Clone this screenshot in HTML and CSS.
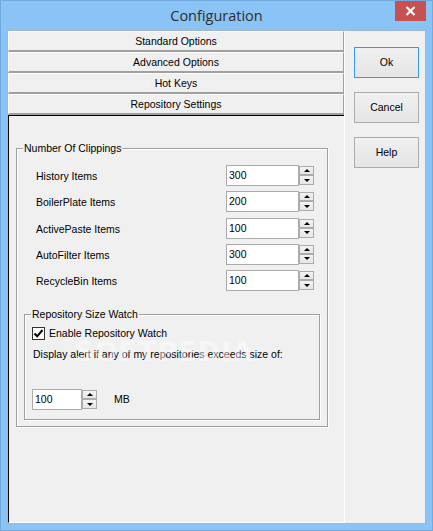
FILE: index.html
```html
<!DOCTYPE html>
<html>
<head>
<meta charset="utf-8">
<link rel="stylesheet" href="styles.css">
</head>
<body>
<div class="window">
  <div class="titlebar">
    <span class="title">Configuration</span>
    <div class="close"><svg width="11" height="10" viewBox="0 0 11 10"><path d="M1.5 1 L9.5 9 M9.5 1 L1.5 9" stroke="#fff" stroke-width="2.2" fill="none"/></svg></div>
  </div>
  <div class="client">
    <div class="main">
      <div class="tab">Standard Options</div>
      <div class="tab">Advanced Options</div>
      <div class="tab">Hot Keys</div>
      <div class="tab">Repository Settings</div>
      <div class="panel">
        <div class="group outer">
          <span class="caption">Number Of Clippings</span>
          <div class="rows">
            <div class="row"><span class="label">History Items</span><div class="field wide">300</div><div class="arrows"><span class="arrow up"><i></i></span><span class="arrow down"><i></i></span></div></div>
            <div class="row"><span class="label">BoilerPlate Items</span><div class="field wide">200</div><div class="arrows"><span class="arrow up"><i></i></span><span class="arrow down"><i></i></span></div></div>
            <div class="row"><span class="label">ActivePaste Items</span><div class="field wide">100</div><div class="arrows"><span class="arrow up"><i></i></span><span class="arrow down"><i></i></span></div></div>
            <div class="row"><span class="label">AutoFilter Items</span><div class="field wide">300</div><div class="arrows"><span class="arrow up"><i></i></span><span class="arrow down"><i></i></span></div></div>
            <div class="row"><span class="label">RecycleBin Items</span><div class="field wide">100</div><div class="arrows"><span class="arrow up"><i></i></span><span class="arrow down"><i></i></span></div></div>
          </div>
          <div class="group inner">
            <span class="caption">Repository Size Watch</span>
            <div class="check-row">
              <span class="checkbox"><svg width="11" height="11" viewBox="0 0 11 11"><path d="M1.5 5.5 L4.2 8.3 L9.5 2" stroke="#000" stroke-width="2" fill="none"/></svg></span>
              <span>Enable Repository Watch</span>
            </div>
            <div class="note">Display alert if any of my repositories exceeds size of:</div>
            <div class="size-row">
              <div class="field small">100</div>
              <div class="arrows"><span class="arrow up"><i></i></span><span class="arrow down"><i></i></span></div>
              <span class="unit">MB</span>
            </div>
          </div>
        </div>
      </div>
    </div>
    <div class="side">
      <div class="btn default">Ok</div>
      <div class="btn">Cancel</div>
      <div class="btn">Help</div>
    </div>
  </div>
  <div class="watermark">SOFTPEDIA<span class="reg">®</span></div>
</div>
</body>
</html>
```
FILE: styles.css
```css
* { box-sizing: border-box; }
html, body { margin: 0; padding: 0; }
body {
  font-family: "Liberation Sans", Arial, sans-serif;
  font-size: 10.5px;
  color: #000;
  background: #8ac3f5;
}
.window {
  position: relative;
  width: 433px;
  height: 531px;
  background: #8ac3f5;
  border: 1px solid #74a9dc;
  padding: 0 6px 6px 6px;
  display: flex;
  flex-direction: column;
  overflow: hidden;
}
.titlebar {
  height: 29px;
  display: flex;
  align-items: center;
  justify-content: center;
  flex: none;
}
.title {
  font-family: "Open Sans", "Noto Sans", sans-serif;
  font-size: 14.5px;
  color: #2e2e2e;
  line-height: 18px;
  margin-top: 1px;
}
.close {
  position: absolute;
  top: -1px;
  right: 6px;
  width: 31px;
  height: 21px;
  background: #c75050;
  display: flex;
  align-items: center;
  justify-content: center;
}
.client {
  flex: 1;
  display: flex;
  border: 1px solid #a3b7cc;
  background: #f0f0f0;
}
.main {
  width: 337px;
  border-right: 1px solid #fff;
  display: flex;
  flex-direction: column;
}
.tab {
  height: 21px;
  border-top: 1px solid #fff;
  border-left: 1px solid #fff;
  border-right: 1px solid #a0a0a0;
  border-bottom: 2px solid #a0a0a0;
  display: flex;
  align-items: center;
  justify-content: center;
  line-height: 13px;
  padding-top: 1px;
  background: #f0f0f0;
}
.panel {
  flex: 1;
  border-top: 1px solid #000;
  border-left: 1px solid #000;
  border-bottom: 1px solid #fff;
  padding: 32px 0 0 7px;
}
.group {
  position: relative;
  border: 1px solid #a0a0a0;
  box-shadow: 1px 1px 0 #fff, inset 1px 1px 0 #fff;
}
.caption {
  position: absolute;
  top: -7px;
  left: 6px;
  line-height: 13px;
  padding: 0 1px;
  background: #f0f0f0;
}
.outer {
  width: 312px;
  height: 279px;
  padding: 16px 0 0 0;
}
.rows {
  display: flex;
  flex-direction: column;
  gap: 5.25px;
  padding-left: 19px;
}
.row {
  display: flex;
  align-items: flex-start;
  height: 21px;
}
.label {
  width: 190px;
  line-height: 13px;
  padding-top: 5px;
}
.field {
  height: 21px;
  background: #fff;
  border: 1px solid #ababab;
  line-height: 13px;
  padding: 3px 0 0 2px;
}
.field.wide { width: 73px; }
.field.small { width: 50px; }
.arrows {
  display: flex;
  flex-direction: column;
  margin-top: 1px;
  width: 15px;
}
.arrow {
  display: flex;
  align-items: center;
  justify-content: center;
  border: 1px solid #acacac;
  background: linear-gradient(#f3f3f3, #e6e6e6);
}
.arrow.up { height: 9px; }
.arrow.down { height: 10px; }
.arrow i {
  width: 0;
  height: 0;
  border-left: 3px solid transparent;
  border-right: 3px solid transparent;
}
.arrow.up i { border-bottom: 3px solid #000; }
.arrow.down i { border-top: 3px solid #000; }
.inner {
  margin: 23px 0 0 7px;
  width: 296px;
  height: 106px;
  padding: 12px 0 0 7px;
}
.check-row {
  display: flex;
  align-items: center;
  height: 13px;
  gap: 4px;
  line-height: 13px;
}
.checkbox {
  width: 13px;
  height: 13px;
  background: #fff;
  border: 1px solid #333;
  display: flex;
  align-items: center;
  justify-content: center;
}
.note {
  margin-top: 8px;
  line-height: 13px;
  padding-left: 1px;
}
.size-row {
  display: flex;
  align-items: flex-start;
  margin-top: 28px;
  height: 21px;
}
.unit {
  margin-left: 17px;
  line-height: 13px;
  padding-top: 4px;
}
.side {
  flex: 1;
  display: flex;
  flex-direction: column;
  gap: 14px;
  padding: 16px 0 0 9px;
}
.btn {
  width: 65px;
  height: 31px;
  border: 1px solid #acacac;
  background: linear-gradient(#f0f0f0, #e5e5e5);
  display: flex;
  align-items: center;
  justify-content: center;
  line-height: 13px;
}
.btn.default { border-color: #3399ff; }
.watermark {
  position: absolute;
  left: 73px;
  top: 336px;
  font-family: "DejaVu Sans", sans-serif;
  font-weight: bold;
  font-size: 27px;
  letter-spacing: 1px;
  color: rgba(255, 255, 255, 0.45);
  line-height: 30px;
  pointer-events: none;
}
.watermark .reg {
  font-size: 10px;
  vertical-align: top;
  font-weight: normal;
}
```
